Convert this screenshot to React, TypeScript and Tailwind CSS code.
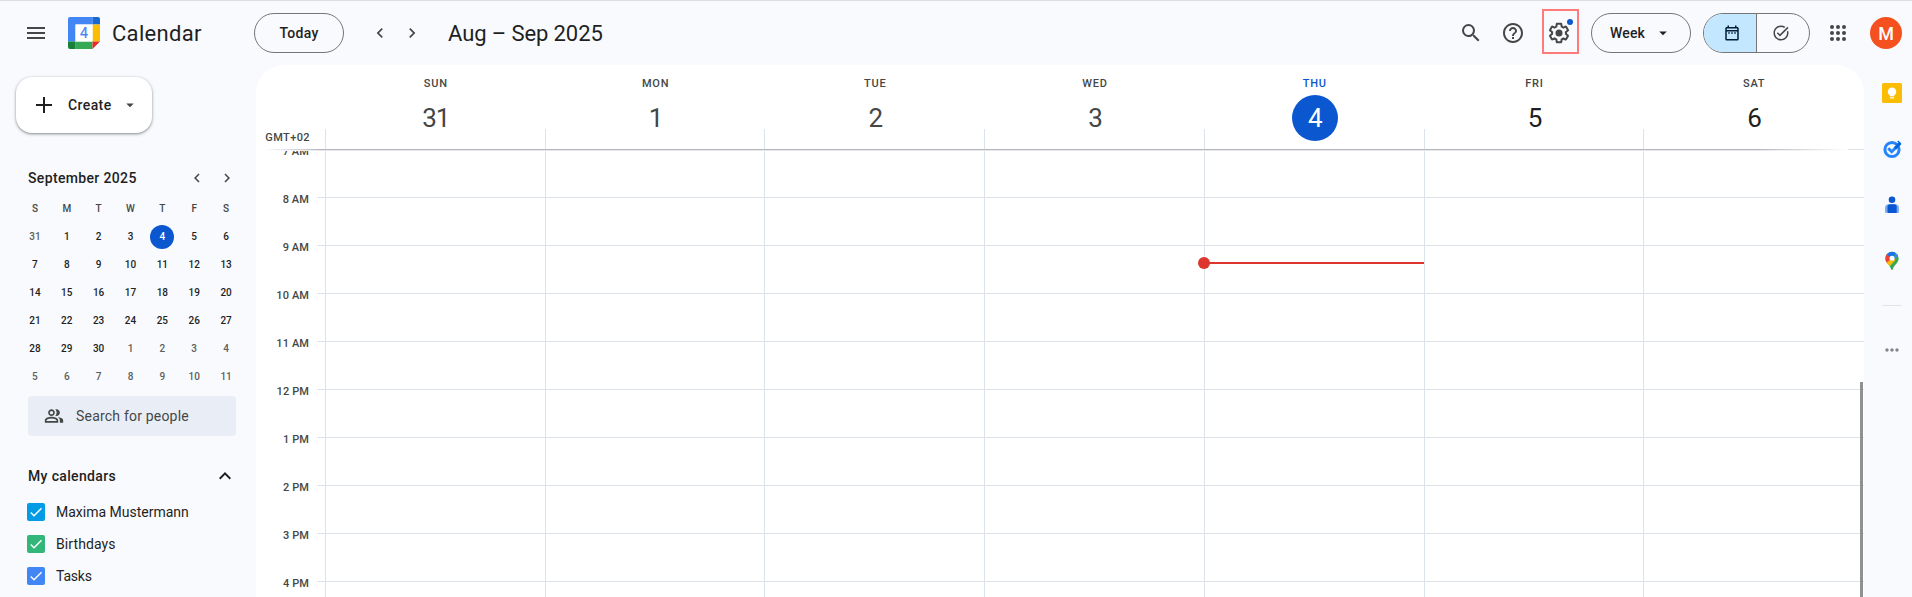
import type { ReactNode } from 'react';
import {
  MdArrowDropDown,
  MdCheck,
  MdChevronLeft,
  MdChevronRight,
  MdExpandLess,
  MdHelpOutline,
  MdMenu,
  MdMoreHoriz,
  MdOutlineDateRange,
  MdOutlinePeopleAlt,
  MdSearch,
  MdTaskAlt
} from 'react-icons/md';

const days = [
  { name: 'SUN', date: 31, tone: 'text-[#444746]' },
  { name: 'MON', date: 1, tone: 'text-[#444746]' },
  { name: 'TUE', date: 2, tone: 'text-[#444746]' },
  { name: 'WED', date: 3, tone: 'text-[#444746]' },
  { name: 'THU', date: 4, tone: 'text-white', today: true },
  { name: 'FRI', date: 5, tone: 'text-[#1f1f1f]' },
  { name: 'SAT', date: 6, tone: 'text-[#1f1f1f]' }
];

const hours = ['7 AM', '8 AM', '9 AM', '10 AM', '11 AM', '12 PM', '1 PM', '2 PM', '3 PM', '4 PM'];

const weeks = [
  [31, 1, 2, 3, 4, 5, 6],
  [7, 8, 9, 10, 11, 12, 13],
  [14, 15, 16, 17, 18, 19, 20],
  [21, 22, 23, 24, 25, 26, 27],
  [28, 29, 30, 1, 2, 3, 4],
  [5, 6, 7, 8, 9, 10, 11]
];

const calendars = [
  { name: 'Maxima Mustermann', color: 'bg-[#039be5]', spacing: 'tracking-[0px]' },
  { name: 'Birthdays', color: 'bg-[#33b679]', spacing: 'tracking-[0.1px]' },
  { name: 'Tasks', color: 'bg-[#4285f4]', spacing: 'tracking-[-0.2px]' }
];

function CalendarLogo() {
  return (
    <svg className="w-8 h-8" viewBox="0 0 32 32">
      <path d="M2 0h22.5v7.5H7.5v17H0V2a2 2 0 0 1 2-2z" fill="#4285f4" />
      <path d="M24.5 0H30a2 2 0 0 1 2 2v5.5h-7.5z" fill="#1967d2" />
      <path d="M24.5 7.5H32v17h-7.5z" fill="#fbbc04" />
      <path d="M7.5 24.5h17V32h-17z" fill="#34a853" />
      <path d="M0 24.5h7.5V32H2a2 2 0 0 1-2-2z" fill="#188038" />
      <path d="M24.5 24.5H32L24.5 32z" fill="#ea2b2b" />
      <path d="M7.5 7.5h17v17h-17z" fill="#fff" />
      <text x="16" y="21" textAnchor="middle" fontSize="14" fill="#4285f4" stroke="#4285f4" strokeWidth="0.2">4</text>
    </svg>
  );
}

function GearIcon() {
  return (
    <svg className="w-6 h-6" viewBox="0 0 24 24" fill="currentColor">
      <path d="M13.85 22.25h-3.7c-.74 0-1.36-.54-1.45-1.27l-.27-1.89c-.27-.14-.53-.29-.79-.46l-1.8.72c-.7.26-1.47-.03-1.81-.65L2.2 15.53c-.35-.66-.2-1.44.36-1.88l1.53-1.19c-.01-.15-.02-.3-.02-.46 0-.15.01-.31.02-.46l-1.52-1.19c-.59-.45-.74-1.26-.37-1.88l1.85-3.19c.34-.62 1.11-.9 1.79-.63l1.81.73c.26-.17.52-.32.78-.46l.27-1.91c.09-.7.71-1.25 1.44-1.25h3.7c.74 0 1.36.54 1.45 1.27l.27 1.89c.27.14.53.29.79.46l1.8-.72c.71-.26 1.48.03 1.82.65l1.84 3.18c.36.66.2 1.44-.36 1.88l-1.52 1.19c.01.15.02.3.02.46s-.01.31-.02.46l1.52 1.19c.56.45.72 1.23.37 1.86l-1.86 3.22c-.34.62-1.11.9-1.8.63l-1.8-.72c-.26.17-.52.32-.78.46l-.27 1.91c-.1.68-.72 1.22-1.46 1.22zm-3.23-2h2.76l.37-2.55.53-.22c.44-.18.88-.44 1.34-.78l.45-.34 2.38.96 1.38-2.4-2.03-1.58.07-.56c.03-.26.06-.51.06-.78s-.03-.53-.06-.78l-.07-.56 2.03-1.58-1.39-2.4-2.39.96-.45-.35c-.42-.32-.87-.58-1.33-.77l-.52-.22-.37-2.55h-2.76l-.37 2.55-.53.21c-.44.19-.88.44-1.34.79l-.45.33-2.38-.95-1.39 2.39 2.03 1.58-.07.56a7 7 0 0 0-.06.79c0 .26.02.53.06.78l.07.56-2.03 1.58 1.38 2.4 2.39-.96.45.35c.43.33.86.58 1.33.77l.53.22.38 2.55z" />
      <circle cx="12" cy="12" r="3.5" />
    </svg>
  );
}

function AppsIcon() {
  return (
    <svg className="w-6 h-6" viewBox="0 0 24 24" fill="currentColor">
      {[6, 12, 18].map((cy) => [6, 12, 18].map((cx) => <circle key={`${cx}-${cy}`} cx={cx} cy={cy} r="2" />))}
    </svg>
  );
}

function PlusIcon() {
  return (
    <svg className="ml-4 w-6 h-6" viewBox="0 0 24 24" fill="currentColor">
      <path d="M11 4h2v7h7v2h-7v7h-2v-7H4v-2h7z" />
    </svg>
  );
}

function KeepIcon() {
  return (
    <svg className="w-5 h-5" viewBox="0 0 20 20">
      <rect width="20" height="20" rx="1.5" fill="#fbbc04" />
      <path d="M10 4.5a4.2 4.2 0 0 0-2.3 7.7v1.1h4.6v-1.1A4.2 4.2 0 0 0 10 4.5zM8 14.2h4v1.3H8z" fill="#fff" />
    </svg>
  );
}

function TasksIcon() {
  return (
    <svg className="w-5 h-5" viewBox="0 0 20 20" fill="none">
      <circle cx="10" cy="10.5" r="7.1" stroke="#2684fc" strokeWidth="3" />
      <path d="M6.2 9.2l3.5 3.5 5-5" stroke="#2684fc" strokeWidth="3" />
      <path d="M13 9.3l5.2-5.2" stroke="#0066da" strokeWidth="3.2" />
      <path d="M15.8 2l3 3" stroke="#0066da" strokeWidth="1.6" />
    </svg>
  );
}

function ContactsIcon() {
  return (
    <svg className="w-5 h-5" viewBox="0 0 20 20">
      <circle cx="10" cy="4.8" r="3.3" fill="#0957d0" />
      <path d="M7 9.3h6a4 4 0 0 1 4 4v3.2a1.5 1.5 0 0 1-1.500 1.500h-11A1.500 1.500 0 0 1 3 16.500v-3.200a4 4 0 0 1 4-4z" fill="#7baaf7" />
      <path d="M8 9.300h4.500a2.200 2.200 0 0 1 2.200 2.200V18H7a1.500 1.500 0 0 1-1.500-1.500v-4.700A2.500 2.500 0 0 1 8 9.300z" fill="#0957d0" />
    </svg>
  );
}

function MapsIcon() {
  return (
    <svg className="w-5 h-5" viewBox="0 0 20 20">
      <clipPath id="map-pin">
        <path d="M10 .8a6.6 6.600 0 0 0-6.600 6.600c0 4.700 5 6.600 5.700 10.800.200.800 1.600.800 1.800 0 .700-4.200 5.700-6.100 5.700-10.800A6.600 6.600 0 0 0 10 .8z" />
      </clipPath>
      <g clipPath="url(#map-pin)">
        <path d="M0 0h20v20H0z" fill="#34a853" />
        <path d="M2 12l8-7 3.500 4L6 17z" fill="#fbbc04" />
        <path d="M0 2l5 1 5 4.500L4 12H0z" fill="#ea4335" />
        <path d="M8.500 9L20-3l-1 5-9 8z" fill="#4285f4" />
        <path d="M4.500 3L8 0h7l-5 7.500z" fill="#1a73e8" />
        <circle cx="10" cy="7.300" r="2.500" fill="#fff" />
      </g>
    </svg>
  );
}

function IconSlot({ children }: { children: ReactNode }) {
  return <button className="w-8 h-8 flex items-center justify-center text-[#444746]">{children}</button>;
}

function Header() {
  return (
    <header className="h-[65px] shrink-0 border-t border-[#dedede] flex items-center justify-between pl-5 pr-2.5">
      <div className="flex items-center">
        <IconSlot><MdMenu className="w-6 h-6" /></IconSlot>
        <div className="ml-4 w-8"><CalendarLogo /></div>
        <span className="ml-3 pt-px w-[142px] text-[22px] leading-7 tracking-[0.3px] text-[#1f1f1f]">Calendar</span>
        <button className="w-[90px] h-10 rounded-full border border-[#747775] text-sm font-medium tracking-[0.3px] text-[#1f1f1f]">
          Today
        </button>
        <div className="ml-5 flex">
          <IconSlot><MdChevronLeft className="w-5 h-5" /></IconSlot>
          <IconSlot><MdChevronRight className="w-5 h-5" /></IconSlot>
        </div>
        <h1 className="ml-5 pt-px text-[22px] leading-7 tracking-[-0.1px] text-[#1f1f1f]">Aug – Sep 2025</h1>
      </div>

      <div className="flex items-center">
        <IconSlot><MdSearch className="w-6 h-6" /></IconSlot>
        <div className="ml-2.5 mr-[13px]">
          <IconSlot><MdHelpOutline className="w-6 h-6" /></IconSlot>
        </div>
        <div className="relative w-[37px] h-[45px] -mt-[3px] border-2 border-[#ff7b7b] flex items-center justify-center text-[#444746]">
          <div className="mt-[3px] -ml-1"><GearIcon /></div>
          <span className="absolute top-2 right-[4px] w-1.5 h-1.5 rounded-full bg-[#0b57d0]" />
        </div>
        <button className="ml-3 w-[100px] h-10 pl-[18px] rounded-full border border-[#747775] flex items-center text-sm font-medium text-[#1f1f1f]">
          <span className="w-9 text-left tracking-[0.15px]">Week</span>
          <MdArrowDropDown className="ml-2 w-[18px] h-[18px]" />
        </button>
        <div className="ml-3 w-[107px] h-10 rounded-full border border-[#747775] flex overflow-hidden">
          <button className="w-[53px] bg-[#c2e7ff] border-r border-[#747775] flex items-center justify-center text-[#001d35]">
            <MdOutlineDateRange className="ml-1 w-[18px] h-[18px]" />
          </button>
          <button className="flex-1 flex items-center justify-center text-[#444746]">
            <MdTaskAlt className="mr-1 w-[18px] h-[18px]" />
          </button>
        </div>
        <div className="ml-3 mr-4"><IconSlot><AppsIcon /></IconSlot></div>
        <span className="w-8 h-8 pt-0.5 rounded-full bg-[#f4511e] flex items-center justify-center text-lg font-medium text-white">M</span>
      </div>
    </header>
  );
}

function MiniMonth() {
  return (
    <section className="mt-[29px]">
      <div className="h-8 pl-7 pr-[14px] flex items-center">
        <h2 className="flex-1 text-sm font-medium tracking-[0.35px] text-[#1f1f1f]">September 2025</h2>
        <MdChevronLeft className="w-[18px] h-[18px] text-[#444746]" />
        <MdChevronRight className="ml-3 w-[18px] h-[18px] mr-[6px] text-[#444746]" />
      </div>
      <div className="pt-px w-[223px] ml-[19px] grid grid-cols-7 text-center text-[10px] font-medium">
        {['S', 'M', 'T', 'W', 'T', 'F', 'S'].map((letter, i) => (
          <span key={i} className="h-7 leading-7 text-[#444746]">{letter}</span>
        ))}
        {weeks.map((week, row) =>
          week.map((date, col) => {
            const outside = (row === 0 && date > 7) || (row > 3 && date < 12);
            const today = row === 0 && date === 4;
            return (
              <span key={`${row}-${col}`} className="h-7 flex items-center justify-center">
                <span
                  className={`w-6 h-6 leading-6 rounded-full ${today ? 'bg-[#0b57d0] text-white' : outside ? 'text-[#5c5f5e]' : 'text-[#1f1f1f]'}`}
                >
                  {date}
                </span>
              </span>
            );
          })
        )}
      </div>
    </section>
  );
}

function Sidebar() {
  return (
    <aside className="w-64 shrink-0 pt-3">
      <button className="ml-4 w-[136px] h-14 rounded-2xl bg-white shadow-[0_1px_2px_rgba(60,64,67,0.4),0_1px_3px_1px_rgba(60,64,67,0.18)] flex items-center text-[#1f1f1f]">
        <PlusIcon />
        <span className="ml-3 w-[45px] text-left text-sm font-medium tracking-[0.4px]">Create</span>
        <MdArrowDropDown className="ml-2 w-[18px] h-[18px] text-[#444746]" />
      </button>

      <MiniMonth />

      <div className="ml-7 mt-[5px] w-52 h-10 rounded bg-[#e9eef6] flex items-center text-[#444746]">
        <MdOutlinePeopleAlt className="ml-4 w-5 h-5" />
        <span className="ml-3 text-sm tracking-[0.2px]">Search for people</span>
      </div>

      <div className="mt-5 h-10 pl-7 pr-[19px] flex items-center justify-between text-[#1f1f1f]">
        <h2 className="text-sm font-medium tracking-[0.35px]">My calendars</h2>
        <MdExpandLess className="w-6 h-6" />
      </div>
      <ul>
        {calendars.map((cal) => (
          <li key={cal.name} className="h-8 pl-[27px] flex items-center">
            <span className={`w-[18px] h-[18px] rounded-[2px] flex items-center justify-center text-white ${cal.color}`}>
              <MdCheck className="w-4 h-4" />
            </span>
            <span className={`ml-[11px] text-sm text-[#1f1f1f] ${cal.spacing}`}>{cal.name}</span>
          </li>
        ))}
      </ul>
    </aside>
  );
}

function WeekHeader() {
  return (
    <div className="h-[84px] shrink-0 pr-px flex">
      <div className="w-[69px] shrink-0 pr-[15px] pt-[65px] text-right text-[11px] leading-4 font-medium tracking-[0.4px] text-[#444746]">GMT+02</div>
      {days.map((day) => (
        <div key={day.name} className="flex-1 flex flex-col">
          <div className="h-16 pl-[2px] flex flex-col items-center pt-[11px]">
            <span className={`text-[11px] leading-4 font-medium tracking-[0.8px] ${day.today ? 'text-[#0b57d0]' : 'text-[#444746]'}`}>
              {day.name}
            </span>
            <span className={`mt-[3px] w-[46px] h-[46px] shrink-0 rounded-full text-center text-[26px] leading-[47px] tracking-[-1px] ${day.tone} ${day.today ? 'bg-[#0b57d0]' : ''}`}>
              {day.date}
            </span>
          </div>
          <div className="flex-1 border-l border-[#dde3ea]" />
        </div>
      ))}
    </div>
  );
}

function WeekGrid() {
  return (
    <div className="relative flex-1 overflow-hidden">
      {hours.map((hour) => (
        <div key={hour} className="h-12 flex">
          <div className="w-[53px] -mt-[5px] text-right text-[11px] leading-4 font-medium tracking-[0.1px] text-[#444746]">{hour}</div>
          <div className="ml-2 w-2 border-t border-[#dde3ea]" />
          {days.map((day) => (
            <div key={day.name} className="relative flex-1 border-t border-l border-[#dde3ea]">
              {day.today && hour === '9 AM' && (
                <div className="absolute z-10 top-4 -left-px right-0 h-0.5 bg-[#dc362e]">
                  <span className="absolute -top-[5px] -left-1.5 w-3 h-3 rounded-full bg-[#dc362e]" />
                </div>
              )}
            </div>
          ))}
          <div className="w-px border-t border-[#dde3ea]" />
        </div>
      ))}
      {/* scroll shadow under the sticky day headers */}
      <div className="absolute top-0 left-2 right-4 h-0.5 bg-[linear-gradient(to_right,#ffffff,#b5b6bd_56px,#b5b6bd_calc(100%-90px),#ffffff)]">
        <div className="h-0.5 pt-px"><div className="h-px bg-white/70" /></div>
      </div>
      <div className="absolute right-px top-[233px] bottom-0 w-[3px] bg-[#8f918f]" />
    </div>
  );
}

function SideRail() {
  return (
    <aside className="w-12 shrink-0 pl-2 flex flex-col items-center">
      {[KeepIcon, TasksIcon, ContactsIcon, MapsIcon].map((Icon, i) => (
        <button key={i} className="w-10 h-14 flex items-center justify-center"><Icon /></button>
      ))}
      <div className="mt-4 w-5 border-t border-[#e1e3e6]" />
      <MdMoreHoriz className="mt-[34px] w-5 h-5 text-[#80868b]" />
    </aside>
  );
}

export default function App() {
  return (
    <div className="w-full h-[597px] overflow-hidden flex flex-col bg-[#f8fafd] font-['Roboto','Noto_Sans',sans-serif]">
      <Header />
      <div className="flex-1 min-h-0 flex">
        <Sidebar />
        <main className="flex-1 flex flex-col overflow-hidden rounded-t-[28px] bg-white">
          <WeekHeader />
          <WeekGrid />
        </main>
        <SideRail />
      </div>
    </div>
  );
}
